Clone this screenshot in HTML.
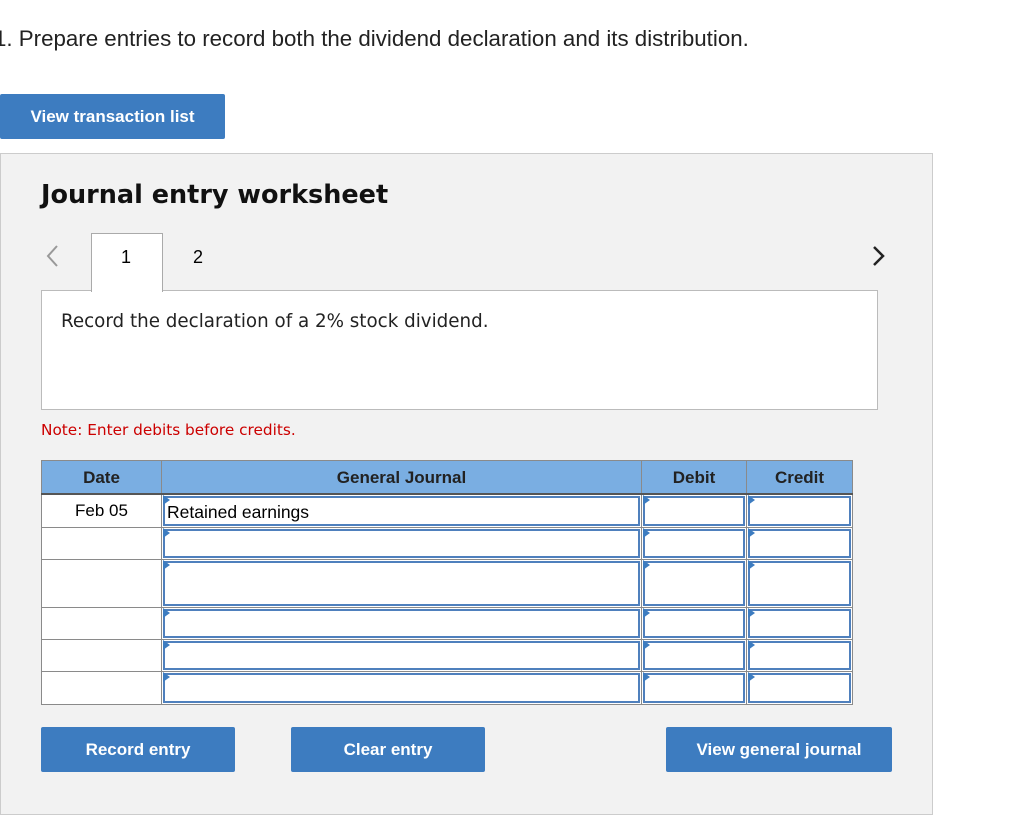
<!DOCTYPE html><html><head><style>
body{margin:0;width:1024px;height:796px;overflow:hidden;background:#fff;font-family:"Liberation Sans",sans-serif;position:relative}
.a{position:absolute}
.btn{position:absolute;background:#3d7cc0;color:#fff;font-weight:bold;font-size:17px;text-align:center;border-radius:2px}
table{border-collapse:collapse;position:absolute;left:41px;top:460px;}
td,th{border:1px solid #8a8a8a;padding:0;font-size:17px}
th{background:#7aaee2;font-weight:bold;color:#222;height:31px;padding-top:1px;border-bottom:2px solid #555}
td{background:#fff;position:relative}
.in{position:absolute;left:1px;right:1px;top:1px;bottom:1px;border:2px solid #4f80bd;box-sizing:border-box}
.in:before{content:"";position:absolute;left:-2px;top:-3px;border-left:7px solid #3d7cc0;border-top:5px solid transparent;border-bottom:5px solid transparent;}
</style></head><body>
<div class="a" style="left:-6px;top:26px;font-size:22.3px;color:#222">1. Prepare entries to record both the dividend declaration and its distribution.</div>
<div class="btn" style="left:0;top:94px;width:225px;height:45px;line-height:45px">View transaction list</div>
<div class="a" style="left:0;top:153px;width:931px;height:660px;background:#f2f2f2;border:1px solid #ccc"></div>
<div class="a" style="left:41px;top:180px;font-family:'DejaVu Sans',sans-serif;font-weight:bold;font-size:25.5px;color:#111">Journal entry worksheet</div>
<svg class="a" style="left:44px;top:244px" width="16" height="24"><path d="M13 2 L4 12 L13 22" fill="none" stroke="#999" stroke-width="2"/></svg>
<svg class="a" style="left:871px;top:244px" width="16" height="24"><path d="M3 3 L12 12 L3 21" fill="none" stroke="#222" stroke-width="2.5"/></svg>
<div class="a" style="left:41px;top:290px;width:835px;height:118px;background:#fff;border:1px solid #bbb"></div>
<div class="a" style="left:91px;top:233px;width:70px;height:58px;background:#fff;border:1px solid #aaa;border-bottom:none"></div>
<div class="a" style="left:121px;top:247px;font-size:18px">1</div>
<div class="a" style="left:193px;top:247px;font-size:18px">2</div>
<div class="a" style="left:61px;top:311px;font-size:18.3px;font-family:'DejaVu Sans',sans-serif;color:#222">Record the declaration of a 2% stock dividend.</div>
<div class="a" style="left:41px;top:421px;font-size:15.3px;font-family:'DejaVu Sans',sans-serif;color:#c00">Note: Enter debits before credits.</div>
<table>
<tr><th style="width:119px">Date</th><th style="width:479px">General Journal</th><th style="width:104px">Debit</th><th style="width:105px">Credit</th></tr>
<tr style="height:33px"><td style="text-align:center">Feb 05</td><td><div class="in" style="padding:4px 2px;font-size:17.5px">Retained earnings</div></td><td><div class="in"></div></td><td><div class="in"></div></td></tr>
<tr style="height:32px"><td></td><td><div class="in"></div></td><td><div class="in"></div></td><td><div class="in"></div></td></tr>
<tr style="height:48px"><td></td><td><div class="in"></div></td><td><div class="in"></div></td><td><div class="in"></div></td></tr>
<tr style="height:32px"><td></td><td><div class="in"></div></td><td><div class="in"></div></td><td><div class="in"></div></td></tr>
<tr style="height:32px"><td></td><td><div class="in"></div></td><td><div class="in"></div></td><td><div class="in"></div></td></tr>
<tr style="height:33px"><td></td><td><div class="in"></div></td><td><div class="in"></div></td><td><div class="in"></div></td></tr>
</table>
<div class="btn" style="left:41px;top:727px;width:194px;height:45px;line-height:45px">Record entry</div>
<div class="btn" style="left:291px;top:727px;width:194px;height:45px;line-height:45px">Clear entry</div>
<div class="btn" style="left:666px;top:727px;width:226px;height:45px;line-height:45px">View general journal</div>
</body></html>
